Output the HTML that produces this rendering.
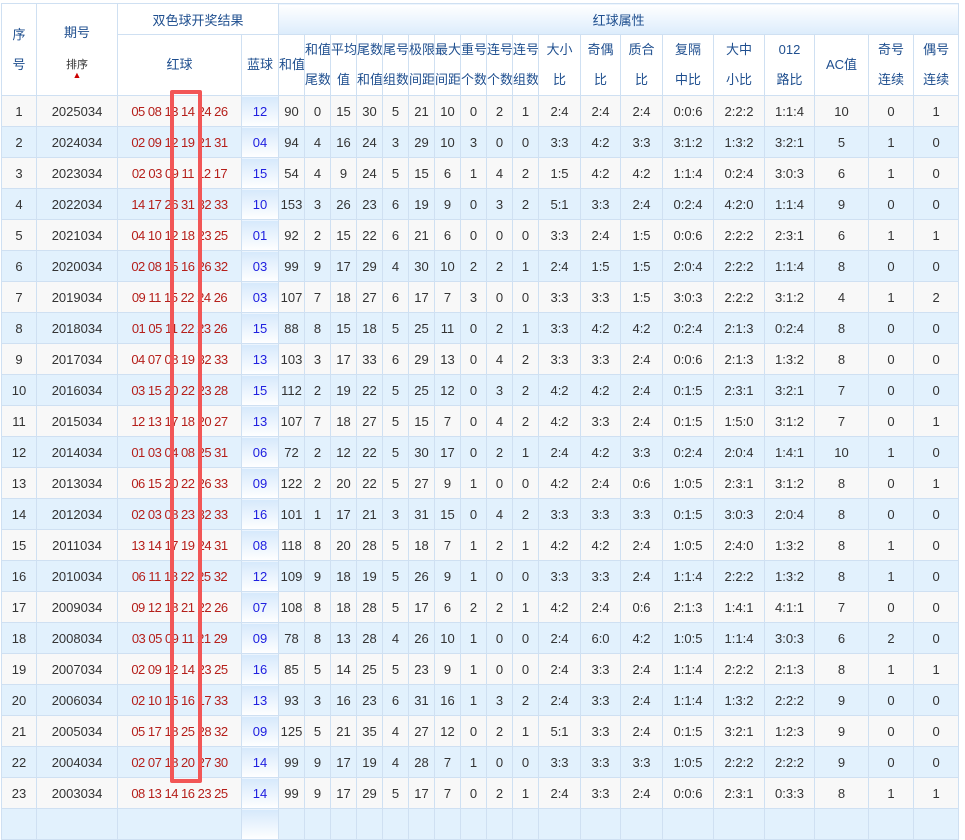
<!DOCTYPE html>
<html><head><meta charset="utf-8">
<style>
html,body{margin:0;padding:0;background:#fff;width:965px;height:815px;overflow:hidden}
body{font-family:"Liberation Sans","Noto Sans CJK SC",sans-serif;font-size:13px;color:#333}
table{position:absolute;left:1px;top:3px;border-collapse:collapse;table-layout:fixed;width:957px}
td,th{border:1px solid #cfe0f2;text-align:center;padding:0;overflow:hidden;white-space:nowrap}
th{font-weight:normal;color:#1f4f8f;background:#fff}
tr.h1 th{height:30px}
tr.h2 th{height:60px;line-height:30px}
th.grad{background:linear-gradient(#fff,#dcecfc)}
tbody td{height:30px}
tbody tr:nth-child(odd) td{background:#f8f8f8}
tbody tr:nth-child(even) td{background:#e2f1fd}
td.r{color:#b51f1a;letter-spacing:-0.5px}
tbody td.b{color:#2020e0;background:linear-gradient(#d6e9fc,#fff)!important}
#box{position:absolute;left:170px;top:90px;width:24px;height:685px;border:4px solid #f25656;border-radius:2px}
.arr{color:#c00;font-size:9px;display:block;line-height:6px}
</style></head><body>
<table>
<colgroup>
<col style="width:35px"><col style="width:81px"><col style="width:124px"><col style="width:37px"><col style="width:26px"><col style="width:26px"><col style="width:26px"><col style="width:26px"><col style="width:26px"><col style="width:26px"><col style="width:26px"><col style="width:26px"><col style="width:26px"><col style="width:26px"><col style="width:42px"><col style="width:40px"><col style="width:42px"><col style="width:51px"><col style="width:51px"><col style="width:50px"><col style="width:54px"><col style="width:45px"><col style="width:45px">
</colgroup>
<thead>
<tr class="h1"><th rowspan="2" style="line-height:30px">序<br>号</th><th rowspan="2">期号<br><br><span style="font-size:11px;color:#333">排序</span><span class="arr">▲</span></th><th colspan="2">双色球开奖结果</th><th colspan="19" class="grad">红球属性</th></tr>
<tr class="h2"><th>红球</th><th>蓝球</th><th>和值</th><th>和值<br>尾数</th><th>平均<br>值</th><th>尾数<br>和值</th><th>尾号<br>组数</th><th>极限<br>间距</th><th>最大<br>间距</th><th>重号<br>个数</th><th>连号<br>个数</th><th>连号<br>组数</th><th>大小<br>比</th><th>奇偶<br>比</th><th>质合<br>比</th><th>复隔<br>中比</th><th>大中<br>小比</th><th>012<br>路比</th><th>AC值</th><th>奇号<br>连续</th><th>偶号<br>连续</th></tr>
</thead>
<tbody>
<tr><td>1</td><td>2025034</td><td class="r">05 08 13 14 24 26</td><td class="b">12</td><td>90</td><td>0</td><td>15</td><td>30</td><td>5</td><td>21</td><td>10</td><td>0</td><td>2</td><td>1</td><td>2:4</td><td>2:4</td><td>2:4</td><td>0:0:6</td><td>2:2:2</td><td>1:1:4</td><td>10</td><td>0</td><td>1</td></tr>
<tr><td>2</td><td>2024034</td><td class="r">02 09 12 19 21 31</td><td class="b">04</td><td>94</td><td>4</td><td>16</td><td>24</td><td>3</td><td>29</td><td>10</td><td>3</td><td>0</td><td>0</td><td>3:3</td><td>4:2</td><td>3:3</td><td>3:1:2</td><td>1:3:2</td><td>3:2:1</td><td>5</td><td>1</td><td>0</td></tr>
<tr><td>3</td><td>2023034</td><td class="r">02 03 09 11 12 17</td><td class="b">15</td><td>54</td><td>4</td><td>9</td><td>24</td><td>5</td><td>15</td><td>6</td><td>1</td><td>4</td><td>2</td><td>1:5</td><td>4:2</td><td>4:2</td><td>1:1:4</td><td>0:2:4</td><td>3:0:3</td><td>6</td><td>1</td><td>0</td></tr>
<tr><td>4</td><td>2022034</td><td class="r">14 17 26 31 32 33</td><td class="b">10</td><td>153</td><td>3</td><td>26</td><td>23</td><td>6</td><td>19</td><td>9</td><td>0</td><td>3</td><td>2</td><td>5:1</td><td>3:3</td><td>2:4</td><td>0:2:4</td><td>4:2:0</td><td>1:1:4</td><td>9</td><td>0</td><td>0</td></tr>
<tr><td>5</td><td>2021034</td><td class="r">04 10 12 18 23 25</td><td class="b">01</td><td>92</td><td>2</td><td>15</td><td>22</td><td>6</td><td>21</td><td>6</td><td>0</td><td>0</td><td>0</td><td>3:3</td><td>2:4</td><td>1:5</td><td>0:0:6</td><td>2:2:2</td><td>2:3:1</td><td>6</td><td>1</td><td>1</td></tr>
<tr><td>6</td><td>2020034</td><td class="r">02 08 15 16 26 32</td><td class="b">03</td><td>99</td><td>9</td><td>17</td><td>29</td><td>4</td><td>30</td><td>10</td><td>2</td><td>2</td><td>1</td><td>2:4</td><td>1:5</td><td>1:5</td><td>2:0:4</td><td>2:2:2</td><td>1:1:4</td><td>8</td><td>0</td><td>0</td></tr>
<tr><td>7</td><td>2019034</td><td class="r">09 11 15 22 24 26</td><td class="b">03</td><td>107</td><td>7</td><td>18</td><td>27</td><td>6</td><td>17</td><td>7</td><td>3</td><td>0</td><td>0</td><td>3:3</td><td>3:3</td><td>1:5</td><td>3:0:3</td><td>2:2:2</td><td>3:1:2</td><td>4</td><td>1</td><td>2</td></tr>
<tr><td>8</td><td>2018034</td><td class="r">01 05 11 22 23 26</td><td class="b">15</td><td>88</td><td>8</td><td>15</td><td>18</td><td>5</td><td>25</td><td>11</td><td>0</td><td>2</td><td>1</td><td>3:3</td><td>4:2</td><td>4:2</td><td>0:2:4</td><td>2:1:3</td><td>0:2:4</td><td>8</td><td>0</td><td>0</td></tr>
<tr><td>9</td><td>2017034</td><td class="r">04 07 08 19 32 33</td><td class="b">13</td><td>103</td><td>3</td><td>17</td><td>33</td><td>6</td><td>29</td><td>13</td><td>0</td><td>4</td><td>2</td><td>3:3</td><td>3:3</td><td>2:4</td><td>0:0:6</td><td>2:1:3</td><td>1:3:2</td><td>8</td><td>0</td><td>0</td></tr>
<tr><td>10</td><td>2016034</td><td class="r">03 15 20 22 23 28</td><td class="b">15</td><td>112</td><td>2</td><td>19</td><td>22</td><td>5</td><td>25</td><td>12</td><td>0</td><td>3</td><td>2</td><td>4:2</td><td>4:2</td><td>2:4</td><td>0:1:5</td><td>2:3:1</td><td>3:2:1</td><td>7</td><td>0</td><td>0</td></tr>
<tr><td>11</td><td>2015034</td><td class="r">12 13 17 18 20 27</td><td class="b">13</td><td>107</td><td>7</td><td>18</td><td>27</td><td>5</td><td>15</td><td>7</td><td>0</td><td>4</td><td>2</td><td>4:2</td><td>3:3</td><td>2:4</td><td>0:1:5</td><td>1:5:0</td><td>3:1:2</td><td>7</td><td>0</td><td>1</td></tr>
<tr><td>12</td><td>2014034</td><td class="r">01 03 04 08 25 31</td><td class="b">06</td><td>72</td><td>2</td><td>12</td><td>22</td><td>5</td><td>30</td><td>17</td><td>0</td><td>2</td><td>1</td><td>2:4</td><td>4:2</td><td>3:3</td><td>0:2:4</td><td>2:0:4</td><td>1:4:1</td><td>10</td><td>1</td><td>0</td></tr>
<tr><td>13</td><td>2013034</td><td class="r">06 15 20 22 26 33</td><td class="b">09</td><td>122</td><td>2</td><td>20</td><td>22</td><td>5</td><td>27</td><td>9</td><td>1</td><td>0</td><td>0</td><td>4:2</td><td>2:4</td><td>0:6</td><td>1:0:5</td><td>2:3:1</td><td>3:1:2</td><td>8</td><td>0</td><td>1</td></tr>
<tr><td>14</td><td>2012034</td><td class="r">02 03 08 23 32 33</td><td class="b">16</td><td>101</td><td>1</td><td>17</td><td>21</td><td>3</td><td>31</td><td>15</td><td>0</td><td>4</td><td>2</td><td>3:3</td><td>3:3</td><td>3:3</td><td>0:1:5</td><td>3:0:3</td><td>2:0:4</td><td>8</td><td>0</td><td>0</td></tr>
<tr><td>15</td><td>2011034</td><td class="r">13 14 17 19 24 31</td><td class="b">08</td><td>118</td><td>8</td><td>20</td><td>28</td><td>5</td><td>18</td><td>7</td><td>1</td><td>2</td><td>1</td><td>4:2</td><td>4:2</td><td>2:4</td><td>1:0:5</td><td>2:4:0</td><td>1:3:2</td><td>8</td><td>1</td><td>0</td></tr>
<tr><td>16</td><td>2010034</td><td class="r">06 11 18 22 25 32</td><td class="b">12</td><td>109</td><td>9</td><td>18</td><td>19</td><td>5</td><td>26</td><td>9</td><td>1</td><td>0</td><td>0</td><td>3:3</td><td>3:3</td><td>2:4</td><td>1:1:4</td><td>2:2:2</td><td>1:3:2</td><td>8</td><td>1</td><td>0</td></tr>
<tr><td>17</td><td>2009034</td><td class="r">09 12 18 21 22 26</td><td class="b">07</td><td>108</td><td>8</td><td>18</td><td>28</td><td>5</td><td>17</td><td>6</td><td>2</td><td>2</td><td>1</td><td>4:2</td><td>2:4</td><td>0:6</td><td>2:1:3</td><td>1:4:1</td><td>4:1:1</td><td>7</td><td>0</td><td>0</td></tr>
<tr><td>18</td><td>2008034</td><td class="r">03 05 09 11 21 29</td><td class="b">09</td><td>78</td><td>8</td><td>13</td><td>28</td><td>4</td><td>26</td><td>10</td><td>1</td><td>0</td><td>0</td><td>2:4</td><td>6:0</td><td>4:2</td><td>1:0:5</td><td>1:1:4</td><td>3:0:3</td><td>6</td><td>2</td><td>0</td></tr>
<tr><td>19</td><td>2007034</td><td class="r">02 09 12 14 23 25</td><td class="b">16</td><td>85</td><td>5</td><td>14</td><td>25</td><td>5</td><td>23</td><td>9</td><td>1</td><td>0</td><td>0</td><td>2:4</td><td>3:3</td><td>2:4</td><td>1:1:4</td><td>2:2:2</td><td>2:1:3</td><td>8</td><td>1</td><td>1</td></tr>
<tr><td>20</td><td>2006034</td><td class="r">02 10 15 16 17 33</td><td class="b">13</td><td>93</td><td>3</td><td>16</td><td>23</td><td>6</td><td>31</td><td>16</td><td>1</td><td>3</td><td>2</td><td>2:4</td><td>3:3</td><td>2:4</td><td>1:1:4</td><td>1:3:2</td><td>2:2:2</td><td>9</td><td>0</td><td>0</td></tr>
<tr><td>21</td><td>2005034</td><td class="r">05 17 18 25 28 32</td><td class="b">09</td><td>125</td><td>5</td><td>21</td><td>35</td><td>4</td><td>27</td><td>12</td><td>0</td><td>2</td><td>1</td><td>5:1</td><td>3:3</td><td>2:4</td><td>0:1:5</td><td>3:2:1</td><td>1:2:3</td><td>9</td><td>0</td><td>0</td></tr>
<tr><td>22</td><td>2004034</td><td class="r">02 07 18 20 27 30</td><td class="b">14</td><td>99</td><td>9</td><td>17</td><td>19</td><td>4</td><td>28</td><td>7</td><td>1</td><td>0</td><td>0</td><td>3:3</td><td>3:3</td><td>3:3</td><td>1:0:5</td><td>2:2:2</td><td>2:2:2</td><td>9</td><td>0</td><td>0</td></tr>
<tr><td>23</td><td>2003034</td><td class="r">08 13 14 16 23 25</td><td class="b">14</td><td>99</td><td>9</td><td>17</td><td>29</td><td>5</td><td>17</td><td>7</td><td>0</td><td>2</td><td>1</td><td>2:4</td><td>3:3</td><td>2:4</td><td>0:0:6</td><td>2:3:1</td><td>0:3:3</td><td>8</td><td>1</td><td>1</td></tr>
<tr><td></td><td></td><td></td><td class="b"></td><td></td><td></td><td></td><td></td><td></td><td></td><td></td><td></td><td></td><td></td><td></td><td></td><td></td><td></td><td></td><td></td><td></td><td></td><td></td></tr>
</tbody>
</table>
<div id="box"></div>
</body></html>
